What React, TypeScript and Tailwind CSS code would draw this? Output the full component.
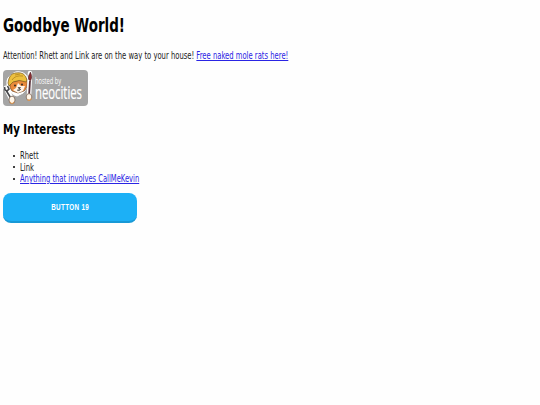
import type { ReactNode } from "react";

const interests = ["Rhett", "Link"];

function Link({ children }: { children: ReactNode }) {
  return (
    <a href="#" className="text-[#2a24e4] underline decoration-1 underline-offset-1">
      {children}
    </a>
  );
}

function NeocitiesBadge() {
  return (
    <svg viewBox="0 0 85 36" className="block h-9 w-[85px]" role="img" aria-label="Hosted by Neocities">
      <rect width="85" height="36" rx="4" fill="#a5a5a5" />
      {/* white sticker outline */}
      <path
        d="M4 15Q3 7 9 5 11 1 17 2 24 3 25 10 25 18 20 23L14 26Q6 24 4 15Z"
        fill="#fff"
        stroke="#fff"
        strokeWidth="1"
      />
      <path d="M7 12 24 9Q25 18 21 21L15 23 9 21Q6 18 7 12Z" fill="#e98a3c" stroke="#5a3a20" strokeWidth=".6" />
      <path d="M15 13 18 16 22 16 20 21 15 23 10 20 13 18Z" fill="#fff4e8" />
      {/* hard hat */}
      <path d="M5 13Q6 4 12 3 22 1 24 10L23 12Q16 9 10 12L6 16Z" fill="#ecc03f" stroke="#7a5a1c" strokeWidth=".7" />
      <path d="M9 10Q12 5 20 6M12 5 17 4" fill="none" stroke="#b88a20" strokeWidth=".9" />
      <circle cx="12" cy="15.5" r=".9" fill="#222" />
      <circle cx="19" cy="14.5" r=".9" fill="#222" />
      <path d="M15 17.5h2.5l-1.2 1.5zM14 20q2.5 1.5 4-1" fill="#333" stroke="#333" strokeWidth=".5" />
      {/* wrench */}
      <path d="M3 18 8 28" stroke="#fff" strokeWidth="5" strokeLinecap="round" />
      <path d="M3.5 21 9 30M1.5 17 2 20 4 21 6 19 4.5 16" fill="none" stroke="#47484b" strokeWidth="1.6" />
      {/* brush */}
      <path d="M27 3 26 26" stroke="#fff" strokeWidth="4.5" strokeLinecap="round" />
      <path d="M27 11 26 26" stroke="#563039" strokeWidth="1.8" />
      <path d="M27.5 2Q30 7 27.5 11 24.5 10 25.5 6Z" fill="#8d2e32" stroke="#42272b" strokeWidth=".5" />
      {/* paws */}
      <ellipse cx="9" cy="30" rx="3" ry="3.8" fill="#fff6e9" stroke="#6b5344" strokeWidth=".7" />
      <ellipse cx="26" cy="27" rx="2.8" ry="3.4" fill="#fff6e9" stroke="#6b5344" strokeWidth=".7" />
      <path d="M7 32q2 3 4 0M24.5 29.5q2 2 4-1" fill="none" stroke="#df9850" strokeWidth="1.2" />
      <g fill="#fff" fontFamily="'Open Sans', sans-serif">
        <text x="32" y="14" fontSize="8.5" textLength="26" lengthAdjust="spacingAndGlyphs">
          hosted by
        </text>
        <text x="32" y="29" fontSize="19" textLength="47" lengthAdjust="spacingAndGlyphs" stroke="#fff" strokeWidth=".2">
          neocities
        </text>
      </g>
    </svg>
  );
}

export default function App() {
  return (
    <main className="flex h-[405px] w-[540px] flex-col items-start overflow-hidden bg-[#fefefe] pl-[3px] font-['DejaVu_Sans_Condensed','DejaVu_Sans',sans-serif] text-[10.2px] leading-[11.5px] whitespace-nowrap text-[#222]">
      <h1 className="mt-[14px] origin-left scale-x-[0.787] text-[19px] leading-[23px] font-bold text-black">
        Goodbye World!
      </h1>
      <p className="mt-[13px] origin-left scale-x-[0.744]">
        Attention! Rhett and Link are on the way to your house! <Link>Free naked mole rats here!</Link>
      </p>
      <div className="mt-[8.5px]">
        <NeocitiesBadge />
      </div>
      <h2 className="mt-[14px] origin-left scale-x-[0.8] text-[14.2px] leading-[18px] font-bold text-black">
        My Interests
      </h2>
      <ul className="mt-[12px] flex flex-col">
        {interests.map((name) => (
          <li key={name} className="flex items-center">
            <span className="ml-[10px] size-[2px] rounded-full bg-black" />
            <span className="ml-[5px] origin-left scale-x-[0.742]">{name}</span>
          </li>
        ))}
        <li className="flex items-center">
          <span className="ml-[10px] size-[2px] rounded-full bg-black" />
          <span className="ml-[5px] origin-left scale-x-[0.737]">
            <Link>Anything that involves CallMeKevin</Link>
          </span>
        </li>
      </ul>
      <button className="mt-[8.5px] flex h-[30px] w-[134px] items-center justify-center rounded-[8px] border-b-2 border-[#1899d6] bg-[#1cb0f6] pt-[2px] font-['Liberation_Sans',sans-serif] text-[9px] font-bold text-white">
        <span className="scale-x-[0.7] tracking-[0.5px]">BUTTON 19</span>
      </button>
    </main>
  );
}
